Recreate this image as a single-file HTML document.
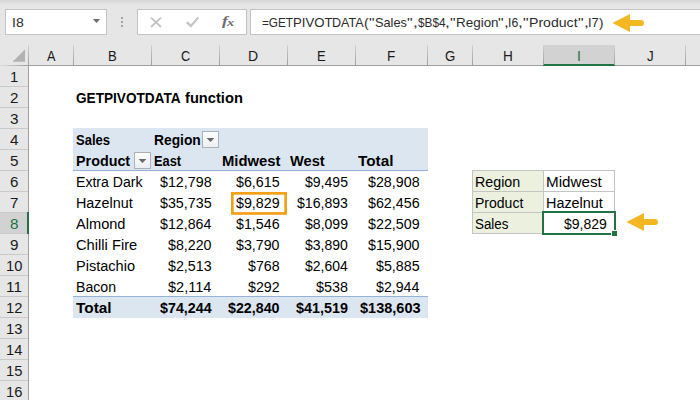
<!DOCTYPE html>
<html><head><meta charset="utf-8"><title>GETPIVOTDATA function</title>
<style>
html,body{margin:0;padding:0}
body{width:700px;height:400px;overflow:hidden;background:#e6e6e6;position:relative;font-family:"Liberation Sans",sans-serif;}
.b{position:absolute;box-sizing:content-box}
.t{position:absolute;white-space:pre;line-height:20px;transform-origin:0 50%;color:#000}
svg{position:absolute;left:0;top:0}
.fx{position:absolute;font-family:"Liberation Serif",serif;font-style:italic;color:#6e6e6e;white-space:pre;line-height:20px}
</style></head><body>
<div class="b" style="left:0;top:0;width:700px;height:5px;background:linear-gradient(#d6d6d6,#e6e6e6)"></div>
<div class="b" style="left:5px;top:9px;width:100px;height:24px;background:#fff;border:1px solid #c3c3c3;"></div>
<div class="b" style="left:137px;top:9px;width:108px;height:24px;background:#fff;border:1px solid #c3c3c3;"></div>
<div class="b" style="left:250px;top:9px;width:460px;height:24px;background:#fff;border:1px solid #c3c3c3;"></div>
<div class="b" style="left:29px;top:66px;width:671px;height:334px;background:#fff;"></div>
<div class="b" style="left:28px;top:65px;width:672px;height:1px;background:#9f9f9f;"></div>
<div class="b" style="left:0;top:65px;width:28px;height:1px;background:linear-gradient(90deg,#dcdcdc,#9f9f9f)"></div>
<div class="b" style="left:28px;top:65px;width:1px;height:335px;background:#9f9f9f;"></div>
<div class="b" style="left:28px;top:45px;width:1px;height:20px;background:linear-gradient(#cfcfcf,#9f9f9f)"></div>
<div class="b" style="left:544px;top:45px;width:70px;height:19px;background:#d2d2d2;"></div>
<div class="b" style="left:543px;top:64px;width:72px;height:2px;background:#217346;"></div>
<div class="b" style="left:73px;top:45px;width:1px;height:20px;background:linear-gradient(#d0d0d0,#9f9f9f)"></div>
<div class="b" style="left:151px;top:45px;width:1px;height:20px;background:linear-gradient(#d0d0d0,#9f9f9f)"></div>
<div class="b" style="left:219px;top:45px;width:1px;height:20px;background:linear-gradient(#d0d0d0,#9f9f9f)"></div>
<div class="b" style="left:287px;top:45px;width:1px;height:20px;background:linear-gradient(#d0d0d0,#9f9f9f)"></div>
<div class="b" style="left:355px;top:45px;width:1px;height:20px;background:linear-gradient(#d0d0d0,#9f9f9f)"></div>
<div class="b" style="left:427px;top:45px;width:1px;height:20px;background:linear-gradient(#d0d0d0,#9f9f9f)"></div>
<div class="b" style="left:472px;top:45px;width:1px;height:20px;background:linear-gradient(#d0d0d0,#9f9f9f)"></div>
<div class="b" style="left:543px;top:45px;width:1px;height:20px;background:linear-gradient(#d0d0d0,#9f9f9f)"></div>
<div class="b" style="left:614px;top:45px;width:1px;height:20px;background:linear-gradient(#d0d0d0,#9f9f9f)"></div>
<div class="b" style="left:685px;top:45px;width:1px;height:20px;background:linear-gradient(#d0d0d0,#9f9f9f)"></div>
<div class="b" style="left:0px;top:213px;width:27px;height:20px;background:#d2d2d2;"></div>
<div class="b" style="left:0px;top:86px;width:28px;height:1px;background:#c9c9c9;"></div>
<div class="b" style="left:0px;top:107px;width:28px;height:1px;background:#c9c9c9;"></div>
<div class="b" style="left:0px;top:128px;width:28px;height:1px;background:#c9c9c9;"></div>
<div class="b" style="left:0px;top:149px;width:28px;height:1px;background:#c9c9c9;"></div>
<div class="b" style="left:0px;top:170px;width:28px;height:1px;background:#c9c9c9;"></div>
<div class="b" style="left:0px;top:191px;width:28px;height:1px;background:#c9c9c9;"></div>
<div class="b" style="left:0px;top:212px;width:28px;height:1px;background:#c9c9c9;"></div>
<div class="b" style="left:0px;top:233px;width:28px;height:1px;background:#c9c9c9;"></div>
<div class="b" style="left:0px;top:254px;width:28px;height:1px;background:#c9c9c9;"></div>
<div class="b" style="left:0px;top:275px;width:28px;height:1px;background:#c9c9c9;"></div>
<div class="b" style="left:0px;top:296px;width:28px;height:1px;background:#c9c9c9;"></div>
<div class="b" style="left:0px;top:317px;width:28px;height:1px;background:#c9c9c9;"></div>
<div class="b" style="left:0px;top:338px;width:28px;height:1px;background:#c9c9c9;"></div>
<div class="b" style="left:0px;top:359px;width:28px;height:1px;background:#c9c9c9;"></div>
<div class="b" style="left:0px;top:380px;width:28px;height:1px;background:#c9c9c9;"></div>
<div class="b" style="left:0px;top:401px;width:28px;height:1px;background:#c9c9c9;"></div>
<div class="b" style="left:27px;top:212px;width:2px;height:22px;background:#217346;"></div>
<div class="b" style="left:73px;top:128px;width:355px;height:42px;background:#dce6f1;"></div>
<div class="b" style="left:73px;top:170px;width:355px;height:1px;background:#95b3d7;"></div>
<div class="b" style="left:73px;top:296px;width:355px;height:1px;background:#95b3d7;"></div>
<div class="b" style="left:73px;top:297px;width:355px;height:21px;background:#dce6f1;"></div>
<div class="b" style="left:473px;top:171px;width:70px;height:62px;background:#ebf1de;"></div>
<div class="b" style="left:472px;top:170px;width:143px;height:1px;background:#c4c4c4;"></div>
<div class="b" style="left:472px;top:191px;width:143px;height:1px;background:#c4c4c4;"></div>
<div class="b" style="left:472px;top:212px;width:143px;height:1px;background:#c4c4c4;"></div>
<div class="b" style="left:472px;top:233px;width:143px;height:1px;background:#c4c4c4;"></div>
<div class="b" style="left:472px;top:170px;width:1px;height:64px;background:#c4c4c4;"></div>
<div class="b" style="left:543px;top:170px;width:1px;height:64px;background:#c4c4c4;"></div>
<div class="b" style="left:614px;top:170px;width:1px;height:64px;background:#c4c4c4;"></div>
<div class="b" style="left:542px;top:211px;width:70px;height:20px;border:2px solid #217346;"></div>
<div class="b" style="left:611px;top:230px;width:6px;height:6px;background:#fff;"></div>
<div class="b" style="left:612px;top:231px;width:5px;height:5px;background:#217346;"></div>
<svg width="700" height="400" viewBox="0 0 700 400"><defs><linearGradient id="bg" x1="0" y1="0" x2="0" y2="1"><stop offset="0" stop-color="#fdfdfd"/><stop offset="1" stop-color="#eceef1"/></linearGradient></defs>
<rect x="232.35" y="193.35" width="53.3" height="20.1" fill="none" stroke="#f4a117" stroke-width="2.7"/>
<path fill="#f3b722" d="M612.5,23 L630.0,14 L630.0,20.1 L641.1,20.1 A2.9,2.9 0 0 1 641.1,25.9 L630.0,25.9 L630.0,32 Z"/>
<path fill="#f3b722" d="M626.5,222 L644.0,213 L644.0,219.1 L655.1,219.1 A2.9,2.9 0 0 1 655.1,224.9 L644.0,224.9 L644.0,231 Z"/>
<path fill="#b2b2b2" d="M25,49.5 L25,61.7 L12.5,61.7 Z"/>
<path fill="#6a6a6a" d="M93,19 L100,19 L96.5,23 Z"/>
<rect x="121" y="17" width="2" height="2" fill="#a3a3a3"/>
<rect x="121" y="21" width="2" height="2" fill="#a3a3a3"/>
<rect x="121" y="25" width="2" height="2" fill="#a3a3a3"/>
<path d="M151,17.7 L161,27 M161,17.7 L151,27" stroke="#c4c4c4" stroke-width="1.8" fill="none"/>
<path d="M185.9,22.9 L187.7,21.3 L190.9,24.3 L197.6,16.7 L199.2,18 L190.9,27.7 Z" fill="#c6c6c6"/>
<rect x="202.5" y="131.5" width="16" height="16" fill="url(#bg)" stroke="#adb0b6" stroke-width="1"/><path fill="#686868" d="M206.6,138 L214.4,138 L210.5,142 Z"/>
<rect x="134.5" y="152.5" width="16" height="16" fill="url(#bg)" stroke="#adb0b6" stroke-width="1"/><path fill="#686868" d="M138.6,159 L146.4,159 L142.5,163 Z"/>
</svg>
<span class="fx" style="left:222px;top:11px;font-size:13.5px;font-weight:bold;transform:scaleX(1.3);transform-origin:0 50%">f</span><span class="fx" style="left:227px;top:13px;font-size:10px;font-weight:bold;transform:scaleX(1.45);transform-origin:0 50%">x</span>
<span class="t" style="left:76px;top:88px;font-size:14.5px;transform:scaleX(0.9384);font-weight:bold;">GETPIVOTDATA</span>
<span class="t" style="left:185px;top:88px;font-size:14.5px;transform:scaleX(1.0118);font-weight:bold;">function</span>
<span class="t" style="left:76px;top:130px;font-size:14px;transform:scaleX(0.9320);font-weight:bold;">Sales</span>
<span class="t" style="left:154px;top:130px;font-size:14px;transform:scaleX(0.9867);font-weight:bold;">Region</span>
<span class="t" style="left:76px;top:151px;font-size:14px;transform:scaleX(1.0231);font-weight:bold;">Product</span>
<span class="t" style="left:154px;top:151px;font-size:14px;transform:scaleX(0.9162);font-weight:bold;">East</span>
<span class="t" style="left:222px;top:151px;font-size:14px;transform:scaleX(1.0601);font-weight:bold;">Midwest</span>
<span class="t" style="left:290px;top:151px;font-size:14px;transform:scaleX(1.0450);font-weight:bold;">West</span>
<span class="t" style="left:358px;top:151px;font-size:14px;transform:scaleX(1.0945);font-weight:bold;">Total</span>
<span class="t" style="left:76px;top:172px;font-size:14px;transform:scaleX(1.0057);">Extra Dark</span>
<span class="t" style="left:160px;top:172px;font-size:14px;transform:scaleX(1.0190);">$12,798</span>
<span class="t" style="left:236px;top:172px;font-size:14px;transform:scaleX(1.0170);">$6,615</span>
<span class="t" style="left:305px;top:172px;font-size:14px;transform:scaleX(1.0028);">$9,495</span>
<span class="t" style="left:368px;top:172px;font-size:14px;transform:scaleX(1.0190);">$28,908</span>
<span class="t" style="left:76px;top:193px;font-size:14px;transform:scaleX(1.0248);">Hazelnut</span>
<span class="t" style="left:160px;top:193px;font-size:14px;transform:scaleX(1.0190);">$35,735</span>
<span class="t" style="left:236px;top:193px;font-size:14px;transform:scaleX(1.0187);">$9,829</span>
<span class="t" style="left:297px;top:193px;font-size:14px;transform:scaleX(1.0070);">$16,893</span>
<span class="t" style="left:368px;top:193px;font-size:14px;transform:scaleX(1.0190);">$62,456</span>
<span class="t" style="left:76px;top:214px;font-size:14px;transform:scaleX(1.0425);">Almond</span>
<span class="t" style="left:160px;top:214px;font-size:14px;transform:scaleX(1.0147);">$12,864</span>
<span class="t" style="left:236px;top:214px;font-size:14px;transform:scaleX(1.0170);">$1,546</span>
<span class="t" style="left:305px;top:214px;font-size:14px;transform:scaleX(1.0045);">$8,099</span>
<span class="t" style="left:368px;top:214px;font-size:14px;transform:scaleX(1.0204);">$22,509</span>
<span class="t" style="left:76px;top:235px;font-size:14px;transform:scaleX(1.0494);">Chilli Fire</span>
<span class="t" style="left:168px;top:235px;font-size:14px;transform:scaleX(1.0153);">$8,220</span>
<span class="t" style="left:236px;top:235px;font-size:14px;transform:scaleX(1.0153);">$3,790</span>
<span class="t" style="left:305px;top:235px;font-size:14px;transform:scaleX(1.0012);">$3,890</span>
<span class="t" style="left:368px;top:235px;font-size:14px;transform:scaleX(1.0176);">$15,900</span>
<span class="t" style="left:76px;top:256px;font-size:14px;transform:scaleX(1.0390);">Pistachio</span>
<span class="t" style="left:168px;top:256px;font-size:14px;transform:scaleX(1.0170);">$2,513</span>
<span class="t" style="left:248px;top:256px;font-size:14px;transform:scaleX(1.0134);">$768</span>
<span class="t" style="left:305px;top:256px;font-size:14px;transform:scaleX(0.9979);">$2,604</span>
<span class="t" style="left:376px;top:256px;font-size:14px;transform:scaleX(1.0170);">$5,885</span>
<span class="t" style="left:76px;top:277px;font-size:14px;transform:scaleX(1.0090);">Bacon</span>
<span class="t" style="left:168px;top:277px;font-size:14px;transform:scaleX(1.0376);">$2,114</span>
<span class="t" style="left:248px;top:277px;font-size:14px;transform:scaleX(1.0157);">$292</span>
<span class="t" style="left:316px;top:277px;font-size:14px;transform:scaleX(1.0265);">$538</span>
<span class="t" style="left:376px;top:277px;font-size:14px;transform:scaleX(1.0120);">$2,944</span>
<span class="t" style="left:76px;top:298px;font-size:14px;transform:scaleX(1.0977);font-weight:bold;">Total</span>
<span class="t" style="left:160px;top:298px;font-size:14px;transform:scaleX(1.0196);font-weight:bold;">$74,244</span>
<span class="t" style="left:228px;top:298px;font-size:14px;transform:scaleX(1.0176);font-weight:bold;">$22,840</span>
<span class="t" style="left:296px;top:298px;font-size:14px;transform:scaleX(1.0295);font-weight:bold;">$41,519</span>
<span class="t" style="left:360px;top:298px;font-size:14px;transform:scaleX(1.0364);font-weight:bold;">$138,603</span>
<span class="t" style="left:475px;top:172px;font-size:14px;transform:scaleX(1.0198);">Region</span>
<span class="t" style="left:546px;top:172px;font-size:14px;transform:scaleX(1.0856);">Midwest</span>
<span class="t" style="left:475px;top:193px;font-size:14px;transform:scaleX(1.0015);">Product</span>
<span class="t" style="left:546px;top:193px;font-size:14px;transform:scaleX(1.0284);">Hazelnut</span>
<span class="t" style="left:475px;top:214px;font-size:14px;transform:scaleX(0.9562);">Sales</span>
<span class="t" style="left:564px;top:214px;font-size:14px;transform:scaleX(1.0021);">$9,829</span>
<span class="t" style="left:262px;top:13px;font-size:13.5px;transform:scaleX(0.8688);color:#2a2a2a;">=GET</span>
<span class="t" style="left:293px;top:13px;font-size:13.5px;transform:scaleX(0.9757);color:#2a2a2a;">PIVOT</span>
<span class="t" style="left:332px;top:13px;font-size:13.5px;transform:scaleX(0.9309);color:#2a2a2a;">DATA</span>
<span class="t" style="left:364px;top:13px;font-size:13.5px;transform:scaleX(1.0425);color:#2a2a2a;">(</span>
<span class="t" style="left:369px;top:13px;font-size:13.5px;transform:scaleX(1.1582);color:#2a2a2a;">"</span>
<span class="t" style="left:375px;top:13px;font-size:13.5px;transform:scaleX(0.9458);color:#2a2a2a;">Sales</span>
<span class="t" style="left:407px;top:13px;font-size:13.5px;transform:scaleX(1.1582);color:#2a2a2a;">"</span>
<span class="t" style="left:413px;top:13px;font-size:13.5px;transform:scaleX(1.3000);color:#2a2a2a;">,</span>
<span class="t" style="left:418px;top:13px;font-size:13.5px;transform:scaleX(0.8760);color:#2a2a2a;">$B$4</span>
<span class="t" style="left:445px;top:13px;font-size:13.5px;transform:scaleX(1.3000);color:#2a2a2a;">,</span>
<span class="t" style="left:450px;top:13px;font-size:13.5px;transform:scaleX(1.1582);color:#2a2a2a;">"</span>
<span class="t" style="left:456px;top:13px;font-size:13.5px;transform:scaleX(0.9950);color:#2a2a2a;">Region</span>
<span class="t" style="left:498px;top:13px;font-size:13.5px;transform:scaleX(1.1582);color:#2a2a2a;">"</span>
<span class="t" style="left:504px;top:13px;font-size:13.5px;transform:scaleX(1.3000);color:#2a2a2a;">,</span>
<span class="t" style="left:508px;top:13px;font-size:13.5px;transform:scaleX(0.9036);color:#2a2a2a;">I6</span>
<span class="t" style="left:518px;top:13px;font-size:13.5px;transform:scaleX(1.3000);color:#2a2a2a;">,</span>
<span class="t" style="left:523px;top:13px;font-size:13.5px;transform:scaleX(1.1582);color:#2a2a2a;">"</span>
<span class="t" style="left:529px;top:13px;font-size:13.5px;transform:scaleX(1.0434);color:#2a2a2a;">Product</span>
<span class="t" style="left:578px;top:13px;font-size:13.5px;transform:scaleX(1.1582);color:#2a2a2a;">"</span>
<span class="t" style="left:584px;top:13px;font-size:13.5px;transform:scaleX(1.3000);color:#2a2a2a;">,</span>
<span class="t" style="left:588px;top:13px;font-size:13.5px;transform:scaleX(0.9524);color:#2a2a2a;">I7</span>
<span class="t" style="left:599px;top:13px;font-size:13.5px;transform:scaleX(0.9877);color:#2a2a2a;">)</span>
<span class="t" style="left:12px;top:13px;font-size:13.5px;transform:scaleX(1.0436);color:#2a2a2a;">I8</span>
<span class="t" style="left:47px;top:46px;font-size:14px;transform:scaleX(0.9046);color:#1a1a1a;">A</span>
<span class="t" style="left:108px;top:46px;font-size:14px;transform:scaleX(0.9359);color:#1a1a1a;">B</span>
<span class="t" style="left:181px;top:46px;font-size:14px;transform:scaleX(0.9096);color:#1a1a1a;">C</span>
<span class="t" style="left:248px;top:46px;font-size:14px;transform:scaleX(1.0007);color:#1a1a1a;">D</span>
<span class="t" style="left:317px;top:46px;font-size:14px;transform:scaleX(0.9285);color:#1a1a1a;">E</span>
<span class="t" style="left:387px;top:46px;font-size:14px;transform:scaleX(0.9679);color:#1a1a1a;">F</span>
<span class="t" style="left:445px;top:46px;font-size:14px;transform:scaleX(0.9479);color:#1a1a1a;">G</span>
<span class="t" style="left:503px;top:46px;font-size:14px;transform:scaleX(0.9698);color:#1a1a1a;">H</span>
<span class="t" style="left:577px;top:46px;font-size:14px;transform:scaleX(1.0019);color:#217346;">I</span>
<span class="t" style="left:647px;top:46px;font-size:14px;transform:scaleX(0.9568);color:#1a1a1a;">J</span>
<span class="t" style="left:10px;top:67px;font-size:14px;transform:scaleX(1.0586);color:#1a1a1a;">1</span>
<span class="t" style="left:10px;top:88px;font-size:14px;transform:scaleX(1.0848);color:#1a1a1a;">2</span>
<span class="t" style="left:10px;top:109px;font-size:14px;transform:scaleX(1.0950);color:#1a1a1a;">3</span>
<span class="t" style="left:10px;top:130px;font-size:14px;transform:scaleX(1.0943);color:#1a1a1a;">4</span>
<span class="t" style="left:10px;top:151px;font-size:14px;transform:scaleX(1.0898);color:#1a1a1a;">5</span>
<span class="t" style="left:10px;top:172px;font-size:14px;transform:scaleX(1.0795);color:#1a1a1a;">6</span>
<span class="t" style="left:10px;top:193px;font-size:14px;transform:scaleX(1.0848);color:#1a1a1a;">7</span>
<span class="t" style="left:10px;top:214px;font-size:14px;transform:scaleX(1.0898);color:#217346;">8</span>
<span class="t" style="left:10px;top:235px;font-size:14px;transform:scaleX(1.0900);color:#1a1a1a;">9</span>
<span class="t" style="left:6px;top:256px;font-size:14px;transform:scaleX(1.0492);color:#1a1a1a;">10</span>
<span class="t" style="left:6px;top:277px;font-size:14px;transform:scaleX(1.0933);color:#1a1a1a;">11</span>
<span class="t" style="left:6px;top:298px;font-size:14px;transform:scaleX(1.0540);color:#1a1a1a;">12</span>
<span class="t" style="left:6px;top:319px;font-size:14px;transform:scaleX(1.0516);color:#1a1a1a;">13</span>
<span class="t" style="left:6px;top:340px;font-size:14px;transform:scaleX(1.0444);color:#1a1a1a;">14</span>
<span class="t" style="left:6px;top:361px;font-size:14px;transform:scaleX(1.0516);color:#1a1a1a;">15</span>
<span class="t" style="left:6px;top:382px;font-size:14px;transform:scaleX(1.0516);color:#1a1a1a;">16</span>
</body></html>
